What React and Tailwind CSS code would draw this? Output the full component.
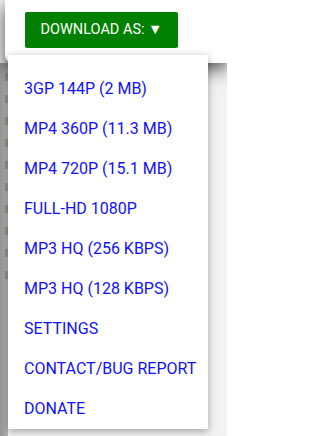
const ITEMS = [
  "3GP 144P (2 MB)",
  "MP4 360P (11.3 MB)",
  "MP4 720P (15.1 MB)",
  "FULL-HD 1080P",
  "MP3 HQ (256 KBPS)",
  "MP3 HQ (128 KBPS)",
  "SETTINGS",
  "CONTACT/BUG REPORT",
  "DONATE",
];

export default function App() {
  return (
    <div className="relative h-[436px] w-[227px] overflow-hidden bg-[#f2f2f2] font-['Roboto',sans-serif]">
      <header className="relative z-10 ml-[5px] h-[63px] rounded-bl-lg bg-white pl-[20px] pt-[12px] shadow-[0_6px_18px_rgba(0,0,0,0.7)]">
        <button className="flex h-[36px] w-[153px] items-center justify-center rounded-[2px] bg-[#008000] text-[14.5px] text-white">
          DOWNLOAD AS: ▼
        </button>
      </header>

      <div className="flex h-[373px]">
        <div className="w-[8px] bg-gradient-to-r from-[#959595] to-[#b5b5b5]">
          <div className="ml-[5px] mt-[10px] flex flex-col gap-[14px]">
            {[0, 1, 2, 3, 4, 5, 6, 7, 8, 9].map((i) => (
              <span key={i} className="h-[8px] w-[3px] bg-[#7b7565]/50" />
            ))}
          </div>
        </div>
        <div className="flex-1" />
      </div>

      <ul className="absolute left-[8px] top-[55px] z-20 w-[200px] bg-white pt-[14px] shadow-[0_2px_8px_rgba(0,0,0,0.35)]">
        {ITEMS.map((label) => (
          <li key={label} className="flex h-[40px] items-center pl-[16px] text-[16px] leading-none text-[#1010ff]">
            {label}
          </li>
        ))}
      </ul>
    </div>
  );
}
